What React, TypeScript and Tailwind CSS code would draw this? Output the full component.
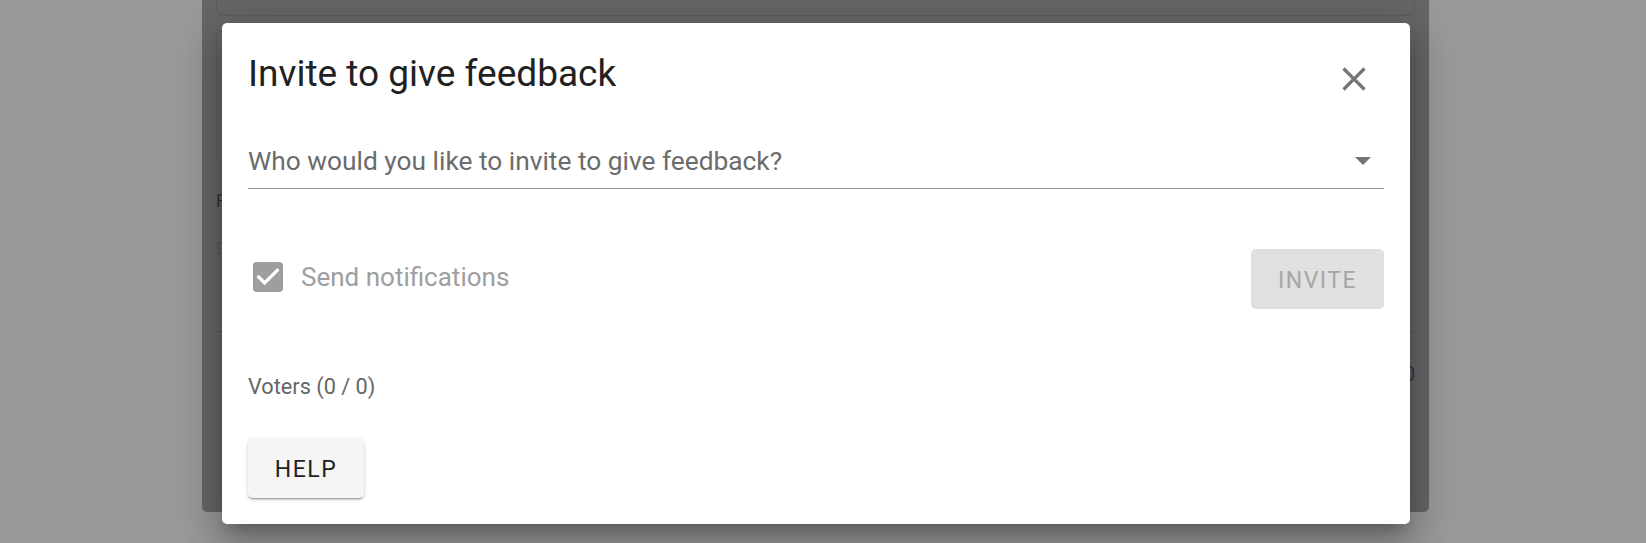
import React from 'react';

function CheckBoxIcon() {
  return (
    <svg viewBox="0 0 24 24" className="w-[40px] h-[40px] fill-[#9e9e9e]">
      <path d="M19 3H5c-1.11 0-2 .9-2 2v14c0 1.1.89 2 2 2h14c1.11 0 2-.9 2-2V5c0-1.1-.89-2-2-2zm-9 14l-5-5 1.41-1.41L10 14.17l7.59-7.59L19 8l-9 9z" />
    </svg>
  );
}

function CloseIcon() {
  return (
    <svg viewBox="0 0 24 24" className="w-[40px] h-[40px] fill-[#757575]">
      <path d="M19 6.41L17.59 5 12 10.59 6.41 5 5 6.41 10.59 12 5 17.59 6.41 19 12 13.41 17.59 19 19 17.59 13.41 12z" />
    </svg>
  );
}

export default function App() {
  return (
    <div className="relative w-full h-[543px] overflow-hidden bg-[#999999] font-[Roboto,sans-serif]">
      {/* Page behind the backdrop */}
      <div className="ml-[202px] w-[1227px] h-[512px] bg-[#666666] rounded-b-[5px] px-[14px]">
        <div className="h-[16px] border border-t-0 border-[#5c5c5c] rounded-b-[6px]"></div>
        <div className="mt-[14px] h-[133px] border border-[#5c5c5c] rounded-[6px]"></div>
        <div className="mt-[26px] text-[18px] leading-[24px] text-[#3b3224]">F</div>
        <div className="mt-[24px] text-[18px] leading-[24px] text-[#5a5a5a]">E</div>
        <div className="mt-[70px] border-t border-[#555555]"></div>
        <div className="mt-[30px] text-right text-[20px] leading-[24px] text-[#2b3850]">0</div>
      </div>

      {/* Dialog */}
      <div className="absolute left-[222px] top-[23px] w-[1188px] h-[501px] bg-white rounded-[5px] shadow-[0_11px_15px_-7px_rgba(0,0,0,0.25),0_24px_38px_3px_rgba(0,0,0,0.16),0_9px_46px_8px_rgba(0,0,0,0.14)] px-[26px] pt-[29px] pb-[26px] flex flex-col">
        <h2 className="text-[37px] leading-[44px] font-normal text-[#212121]">Invite to give feedback</h2>
        <button className="absolute right-[36px] top-[36px]">
          <CloseIcon />
        </button>

        <div className="mt-[49px] flex items-center pb-[11px] border-b border-[#949494]">
          <span className="flex-1 text-[26.3px] leading-[32px] text-[#6b6b6b]">Who would you like to invite to give feedback?</span>
          <svg width="16" height="8" viewBox="0 0 16 8" className="mr-[13px] fill-[#757575]">
            <path d="M0 0h16L8 8z" />
          </svg>
        </div>

        <div className="mt-[60px] h-[60px] flex items-center justify-between">
          <label className="flex items-center gap-[13px] mb-[4px]">
            <CheckBoxIcon />
            <span className="text-[26px] leading-[32px] text-[#9e9e9e]">Send notifications</span>
          </label>
          <button disabled className="w-[133px] h-[60px] pt-[4px] rounded-[5px] bg-[#e0e0e0] text-[#a6a6a6] text-[23px] font-normal tracking-[1.5px]">INVITE</button>
        </div>

        <div className="mt-[63px] text-[21.7px] leading-[30px] text-[#666666]">Voters (0 / 0)</div>

        <button className="mt-[37px] w-[116px] h-[59px] pt-[4px] rounded-[5px] bg-[#f5f5f5] text-[#212121] text-[23px] font-normal tracking-[1.5px] shadow-[0_3px_1px_-2px_rgba(0,0,0,0.2),0_2px_2px_0_rgba(0,0,0,0.14),0_1px_5px_0_rgba(0,0,0,0.12)]">HELP</button>
      </div>
    </div>
  );
}
